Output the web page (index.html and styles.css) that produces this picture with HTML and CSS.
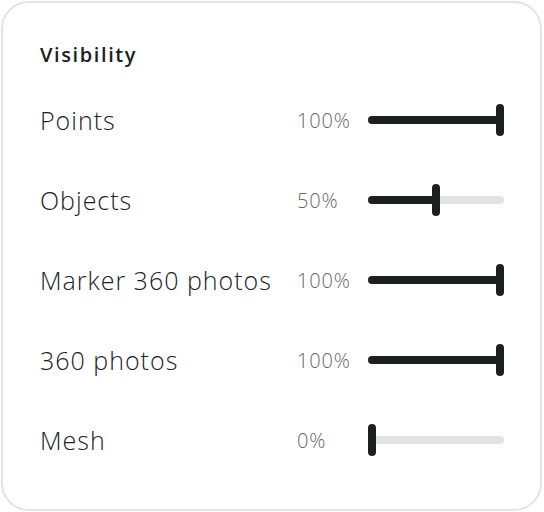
FILE: index.html
```html
<!DOCTYPE html>
<html>
<head>
<meta charset="utf-8">
<link rel="stylesheet" href="styles.css">
</head>
<body>
<div class="card">
  <h2 class="title">Visibility</h2>
  <div class="rows">
    <div class="row">
      <span class="label">Points</span>
      <span class="pct">100%</span>
      <div class="slider"><div class="fill" style="width:136px"></div><div class="thumb" style="left:128px"></div></div>
    </div>
    <div class="row">
      <span class="label">Objects</span>
      <span class="pct">50%</span>
      <div class="slider"><div class="fill" style="width:72px"></div><div class="thumb" style="left:64px"></div></div>
    </div>
    <div class="row">
      <span class="label">Marker 360 photos</span>
      <span class="pct">100%</span>
      <div class="slider"><div class="fill" style="width:136px"></div><div class="thumb" style="left:128px"></div></div>
    </div>
    <div class="row">
      <span class="label">360 photos</span>
      <span class="pct">100%</span>
      <div class="slider"><div class="fill" style="width:136px"></div><div class="thumb" style="left:128px"></div></div>
    </div>
    <div class="row">
      <span class="label">Mesh</span>
      <span class="pct">0%</span>
      <div class="slider"><div class="fill" style="width:0px"></div><div class="thumb" style="left:0px"></div></div>
    </div>
  </div>
</div>
</body>
</html>
```
FILE: styles.css
```css
html, body {
  margin: 0;
  padding: 0;
  background: #ffffff;
}
body {
  padding: 1px 0 0 1px;
  font-family: "Open Sans", Roboto, sans-serif;
  color: #1d2023;
}
.card {
  box-sizing: border-box;
  width: 541px;
  height: 510px;
  border: 2px solid #e3e3e3;
  border-radius: 28px;
  padding: 40px 36px 0 37px;
}
.title {
  margin: 0 0 13px 0;
  font-size: 20px;
  line-height: 24px;
  font-weight: 600;
  letter-spacing: 1.6px;
}
.rows {
  display: flex;
  flex-direction: column;
}
.row {
  display: grid;
  grid-template-columns: 1fr 71px 136px;
  align-items: center;
  height: 80px;
}
.label {
  font-size: 25px;
  font-weight: 300;
  letter-spacing: 1px;
  color: #202326;
}
.pct {
  font-size: 20px;
  font-weight: 300;
  letter-spacing: 0.8px;
  color: #666666;
}
.slider {
  position: relative;
  height: 8px;
  border-radius: 4px;
  background: #e1e2e4;
}
.fill {
  height: 8px;
  border-radius: 4px;
  background: #1d2023;
}
.thumb {
  position: absolute;
  top: -12px;
  width: 8px;
  height: 32px;
  border-radius: 4px;
  background: #1d2023;
}
```
